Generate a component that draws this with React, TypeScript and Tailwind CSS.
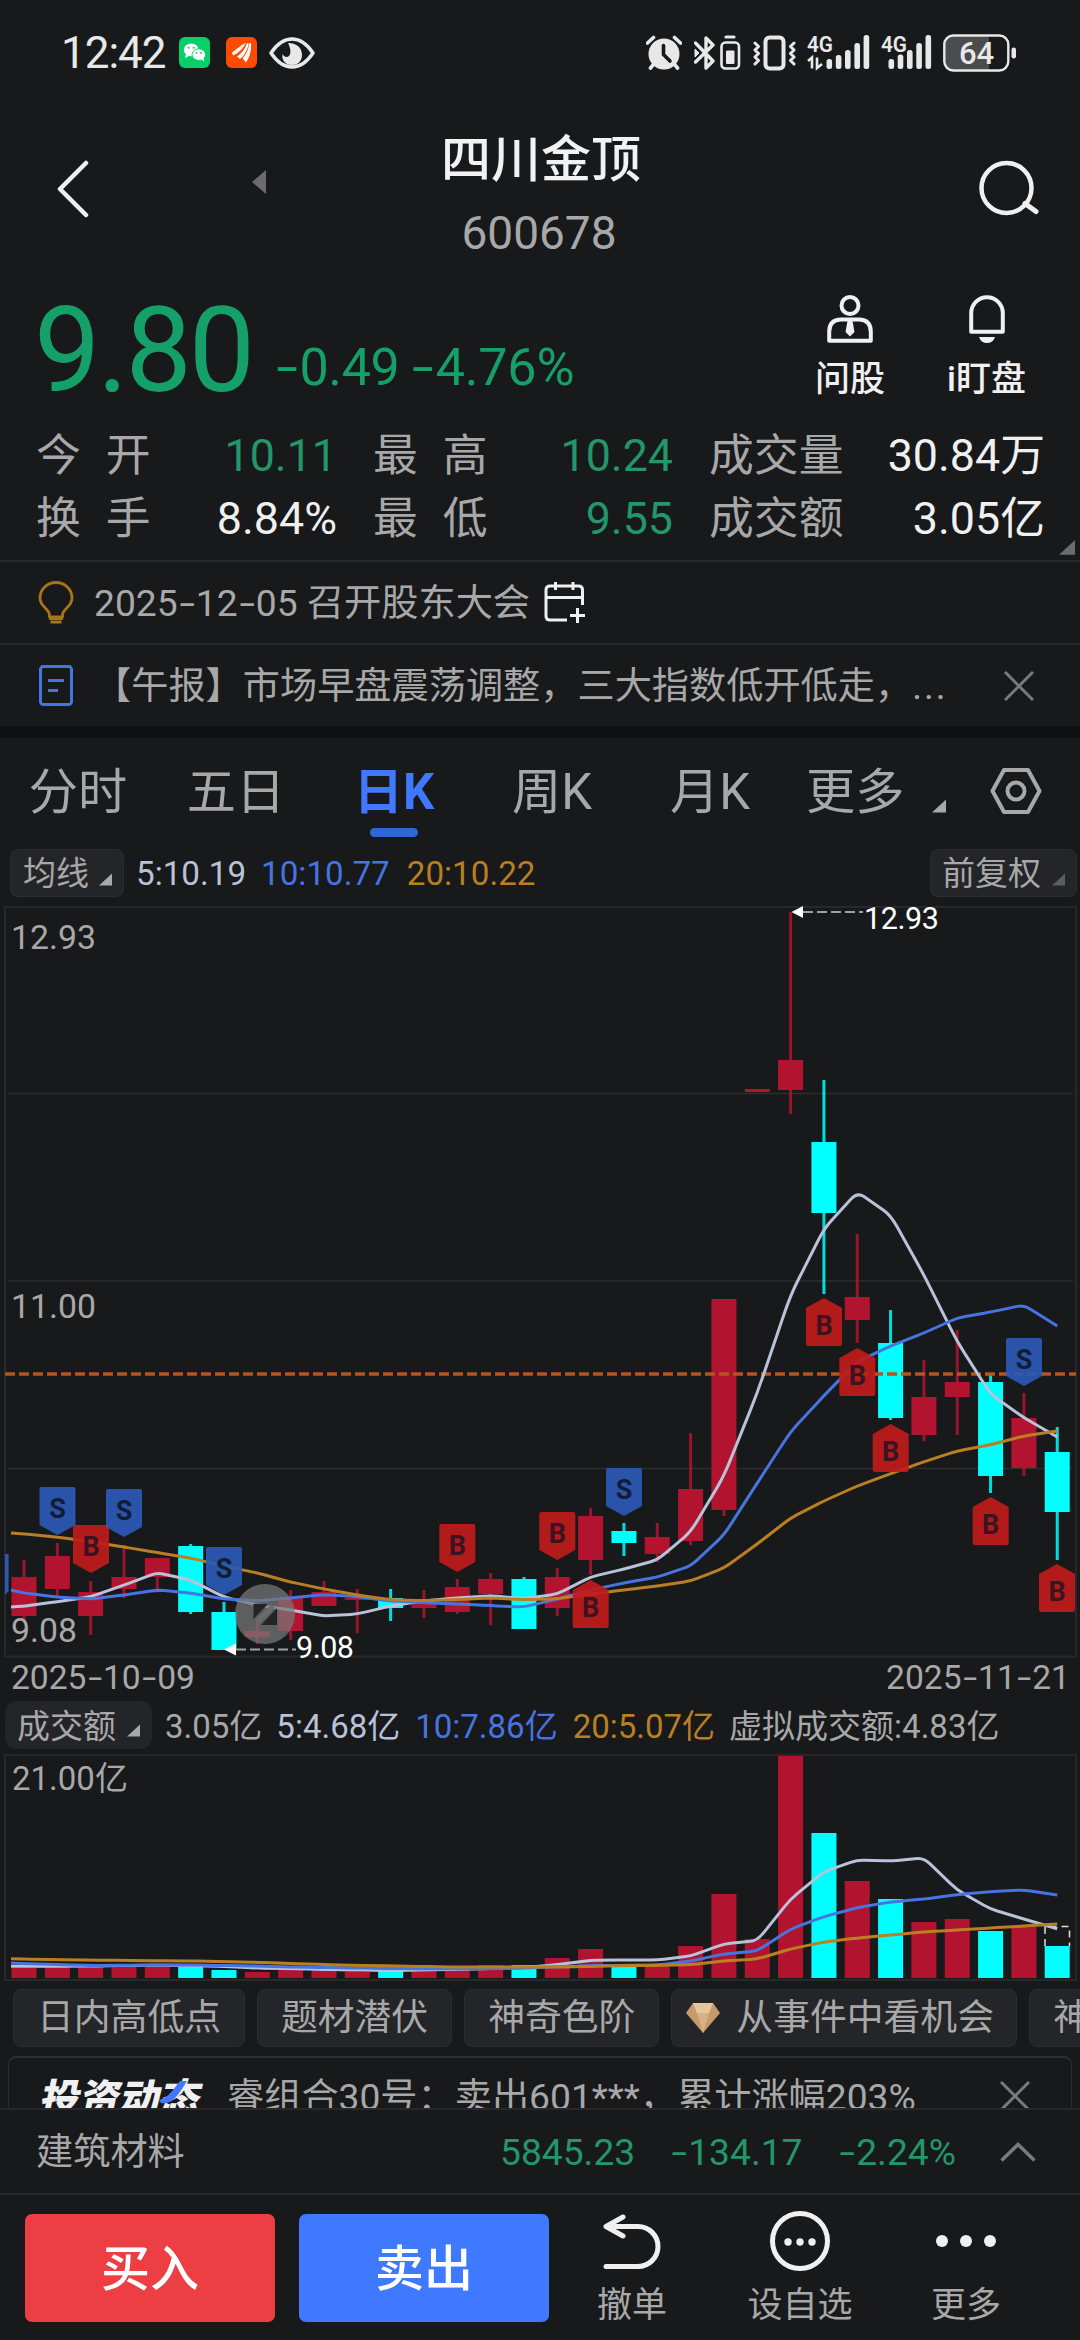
import React from "react";

const FONT = "font-[Roboto,'Noto_Sans_CJK_SC',sans-serif]";

const UP = "#b2142f";
const DOWN = "#00ffff";

// [wick top, wick bottom, body top, body bottom, is down]
const candles: [number, number, number, number, number][] = [
  [1560, 1621, 1577, 1616, 0],
  [1543, 1598, 1556, 1589, 0],
  [1581, 1635, 1592, 1616, 0],
  [1545, 1598, 1577, 1589, 0],
  [1558, 1592, 1558, 1577, 0],
  [1544, 1614, 1546, 1612, 1],
  [1602, 1650, 1612, 1650, 1],
  [1622, 1644, 1631, 1637, 0],
  [1590, 1640, 1598, 1631, 0],
  [1581, 1606, 1592, 1606, 0],
  [1589, 1633, 1598, 1600, 0],
  [1589, 1621, 1598, 1608, 1],
  [1590, 1618, 1602, 1608, 0],
  [1579, 1614, 1587, 1612, 0],
  [1573, 1625, 1579, 1594, 0],
  [1577, 1629, 1579, 1629, 1],
  [1568, 1616, 1577, 1608, 0],
  [1508, 1575, 1516, 1560, 0],
  [1523, 1556, 1531, 1543, 1],
  [1523, 1562, 1537, 1554, 0],
  [1433, 1545, 1489, 1541, 0],
  [1299, 1516, 1299, 1510, 0],
  [1089, 1092, 1089, 1092, 0],
  [912, 1114, 1060, 1090, 0],
  [1080, 1294, 1142, 1213, 1],
  [1234, 1343, 1297, 1320, 0],
  [1310, 1420, 1343, 1418, 1],
  [1360, 1441, 1397, 1435, 0],
  [1330, 1435, 1382, 1397, 0],
  [1374, 1493, 1382, 1476, 1],
  [1393, 1476, 1418, 1468, 0],
  [1427, 1560, 1452, 1512, 1],
];

const volumes = [
  1968, 1967, 1967, 1967, 1966, 1966, 1970, 1972, 1970, 1970, 1972, 1971, 1969,
  1969, 1965, 1965, 1958, 1949, 1966, 1966, 1946, 1894, 1939, 1756, 1833, 1881,
  1899, 1922, 1919, 1931, 1926, 1946,
];

// moving averages, first value sits on the left edge of the plot
const ma5 = [
  1607, 1606, 1601.7, 1596.7, 1585, 1572.7, 1580, 1597, 1605, 1610, 1616, 1614,
  1606, 1600.7, 1598, 1595.7, 1598.7, 1594, 1577, 1569, 1560, 1532, 1476, 1393,
  1295, 1229, 1192, 1215, 1275, 1341.7, 1394, 1417.7, 1437,
];
const ma10 = [
  1590, 1593, 1597, 1599, 1595, 1590, 1593, 1599, 1600.7, 1598, 1594.7, 1596.7,
  1601, 1602.7, 1604, 1605.7, 1607, 1599, 1590, 1583, 1577, 1566, 1535, 1483,
  1431.7, 1395.7, 1361.7, 1346, 1333, 1318, 1312, 1305, 1326,
];
const ma20 = [
  1533, 1534, 1537, 1541.7, 1547, 1552.7, 1558, 1566, 1573, 1582, 1589, 1595,
  1599.7, 1600.7, 1599.5, 1598, 1599.7, 1598.7, 1594, 1590, 1586, 1581, 1568,
  1544, 1518, 1501, 1486, 1473.7, 1461.7, 1451, 1444.7, 1436, 1431,
];
const vol5 = [
  1966.3, 1966.3, 1966.3, 1966, 1965.5, 1965.3, 1965.5, 1966.3, 1968, 1968.7,
  1969.5, 1970, 1970.5, 1970, 1969.3, 1968.5, 1967.7, 1964.7, 1960.3, 1960,
  1960, 1956, 1944, 1940.7, 1899, 1871.7, 1860, 1861, 1858, 1890, 1909, 1919,
  1928.7,
];
const vol10 = [
  1963, 1963.5, 1964.5, 1965.5, 1965.3, 1965, 1965, 1965.5, 1966, 1967, 1967.5,
  1968, 1968.5, 1968.7, 1968.7, 1968.7, 1968, 1966.7, 1965.7, 1965.3, 1965,
  1961, 1954, 1951, 1929, 1916.7, 1907.7, 1902, 1899, 1894.7, 1891.7, 1890,
  1895,
];
const vol20 = [
  1958.7, 1959, 1959.7, 1960.2, 1960.4, 1960.7, 1961, 1961.5, 1962.3, 1963.5,
  1964.5, 1965.3, 1966, 1966.5, 1967, 1967, 1967, 1967, 1966.5, 1965.7, 1965.3,
  1964.7, 1961, 1959, 1949, 1942, 1938, 1935, 1932, 1930, 1928, 1926, 1924,
];

const badges: [number, number, string, string][] = [
  [57.5, 1487, "S", "down"],
  [91, 1525, "B", "down"],
  [124, 1489, "S", "down"],
  [224, 1547, "S", "down"],
  [457.3, 1524, "B", "down"],
  [557.3, 1512, "B", "down"],
  [590.7, 1580, "B", "up"],
  [624, 1468, "S", "down"],
  [824, 1298, "B", "up"],
  [857.3, 1348, "B", "up"],
  [890.7, 1424, "B", "up"],
  [990.7, 1497, "B", "up"],
  [1024, 1338, "S", "down"],
  [1057, 1564, "B", "up"],
];

const cx = (i: number) => 24 + i * 33.33;

// smooths the corners between two samples
function linePath(values: number[]) {
  const pts = values.map((y, i) => [i === 0 ? 11 : cx(i - 1), y]);
  let d = `M${pts[0][0]} ${pts[0][1]}`;
  for (let i = 1; i < pts.length - 1; i++) {
    const [px, py] = pts[i - 1];
    const [x, y] = pts[i];
    const [nx, ny] = pts[i + 1];
    const t = 0.2;
    d += ` L${x + (px - x) * t} ${y + (py - y) * t} Q${x} ${y} ${x + (nx - x) * t} ${y + (ny - y) * t}`;
  }
  const last = pts[pts.length - 1];
  return `${d} L${last[0]} ${last[1]}`;
}

// digits with the wide dash
function Num({ children }: { children: string }) {
  return (
    <>
      {children.split("-").map((part, i) => (
        <React.Fragment key={i}>
          {i > 0 && (
            <span className="inline-block w-[.49em] scale-x-150 text-center">
              -
            </span>
          )}
          {part}
        </React.Fragment>
      ))}
    </>
  );
}

function Corner({ className }: { className: string }) {
  return (
    <svg viewBox="0 0 14 13" className={className} fill="currentColor">
      <path d="M14 0V13H0Z" />
    </svg>
  );
}

function Close({ className }: { className?: string }) {
  return (
    <svg width="30" height="30" viewBox="0 0 30 30" className={className} stroke="#7a7a7b" strokeWidth="3">
      <path d="M1 1L29 29M29 1L1 29" />
    </svg>
  );
}

function StatusBar() {
  return (
    <div className="flex h-[105px] items-center pl-[61px] text-[#e8e8e8]">
      <span className="w-[118px] text-[44px] leading-none tracking-[-1px]">
        12:42
      </span>
      <svg width="31" height="31" viewBox="0 0 31 31">
        <rect width="31" height="31" rx="6" fill="#07cf69" />
        <ellipse cx="12.2" cy="12.8" rx="7.4" ry="6.4" fill="#fff" />
        <path d="M7 17l-1 4 4-2z" fill="#fff" />
        <ellipse cx="19.8" cy="17.6" rx="6.8" ry="5.8" fill="#fff" stroke="#07cf69" strokeWidth="1" />
        <path d="M22 22l3 2.600-.5-4z" fill="#fff" />
        <g fill="#07cf69">
          <circle cx="9.600" cy="10.800" r="1" />
          <circle cx="14.600" cy="10.800" r="1" />
          <circle cx="17.600" cy="16" r=".9" />
          <circle cx="22" cy="16" r=".9" />
        </g>
      </svg>
      <svg width="31" height="31" viewBox="0 0 31 31" className="ml-4">
        <rect width="31" height="31" rx="6" fill="#ff4a02" />
        <g fill="#fff">
          <path d="M6 15.500C11 12 14 8.500 20 6C17 11 13 16 7 18.500Z" />
          <path d="M11 19.500C16 16 19 12 21 6L22.500 6.500C22 13 18 19 14 22Z" />
          <path d="M16.500 21C21 17 22.500 12 23 6.500L25 6C25.500 13 24 20 20 25.500Z" />
        </g>
      </svg>
      <svg width="46" height="32" viewBox="0 0 46 32" className="ml-3" fill="none">
        <path
          d="M2 16C8 7 15 2 23 2S38 7 44 16C38 25 31 30 23 30S8 25 2 16Z"
          stroke="#e8e8e8"
          strokeWidth="3.500"
          strokeLinejoin="round"
        />
        <path
          d="M19 6C27 6 33 10 33 18C33 24 29 28 23 28C16 28 12.500 23 13.500 17C15 20 18 21 20 19C22.500 16 21.500 11 19 6Z"
          fill="#e8e8e8"
        />
      </svg>

      <div className="ml-[331px] flex items-center">
        <svg width="36" height="35" viewBox="0 0 36 35" fill="none" stroke="#e8e8e8">
          <circle cx="18" cy="19" r="15.500" fill="#e8e8e8" stroke="none" />
          <path d="M1.500 8L7.500 2.500M34.500 8L28.500 2.500M7 30L4.500 33M29 30L31.500 33" strokeWidth="3.600" strokeLinecap="round" />
          <path d="M17.500 10.500V19.500L24 26" stroke="#18191b" strokeWidth="3.600" strokeLinecap="round" />
        </svg>
        <svg width="47" height="36" viewBox="0 0 47 36" className="ml-3" fill="none" stroke="#e8e8e8">
          <path d="M1.500 8L19 26L12 33V3L19 10L1.500 27" strokeWidth="3.400" strokeLinejoin="round" strokeLinecap="round" />
          <path d="M1 14L5 18L1 22Z" fill="#e8e8e8" strokeWidth="1" />
          <path d="M32 2H40" strokeWidth="3.200" strokeLinecap="round" />
          <rect x="27.500" y="7.500" width="17.500" height="26" rx="4" strokeWidth="2.600" />
          <rect x="32" y="15.500" width="8.500" height="13.500" rx="1" fill="#e8e8e8" stroke="none" />
        </svg>
        <svg width="43" height="36" viewBox="0 0 43 36" className="ml-3" fill="none" stroke="#e8e8e8">
          <rect x="12.500" y="2.500" width="18" height="31" rx="4" strokeWidth="4" />
          <path d="M2 8L5.500 11.500L2 15L5.500 18.500L2 22L5.500 25.500L2 29M41 8L37.500 11.500L41 15L37.500 18.500L41 22L37.500 25.500L41 29" strokeWidth="3" strokeLinejoin="round" strokeLinecap="round" />
        </svg>
        <svg width="63" height="43" viewBox="0 -4 63 43" className="ml-[11px]" fill="#e8e8e8">
          <text x="0" y="17" fontSize="22" fontWeight="600" textLength="26" lengthAdjust="spacingAndGlyphs">
            4G
          </text>
          <path d="M1 26L5 22.500V33.500M10 22.500V33L15 29" fill="none" stroke="#e8e8e8" strokeWidth="2.600" />
          <rect x="19.500" y="24" width="5.600" height="10" rx="2.500" />
          <rect x="28.800" y="20" width="5.600" height="14" rx="2.500" />
          <rect x="38" y="15" width="5.600" height="19" rx="2.500" />
          <rect x="47.400" y="8" width="5.600" height="26" rx="2.500" />
          <rect x="56.600" y="0" width="5.600" height="34" rx="2.500" />
        </svg>
        <svg width="51" height="43" viewBox="0 -4 51 43" className="ml-[11px]" fill="#e8e8e8">
          <text x="0" y="17" fontSize="22" fontWeight="600" textLength="26" lengthAdjust="spacingAndGlyphs">
            4G
          </text>
          <rect x="7.500" y="24" width="5.600" height="10" rx="2.500" />
          <rect x="16.700" y="19.500" width="5.600" height="14.500" rx="2.500" />
          <rect x="26" y="15" width="5.600" height="19" rx="2.500" />
          <rect x="35.300" y="8" width="5.600" height="26" rx="2.500" />
          <rect x="44.500" y="0" width="5.600" height="34" rx="2.500" />
        </svg>
        <svg width="74" height="38" viewBox="0 0 74 38" className="ml-[11px]" fill="#e8e8e8">
          <path d="M10 2H46V36H10Q2 36 2 28V10Q2 2 10 2Z" fill="#4b4c4d" />
          <rect x="1.300" y="1.500" width="64" height="35" rx="9" fill="none" stroke="#e8e8e8" strokeWidth="2.400" />
          <rect x="68.500" y="13.500" width="4.500" height="11" rx="2.200" />
          <text x="33.500" y="29.500" fontSize="31" fontWeight="500" textAnchor="middle">
            64
          </text>
        </svg>
      </div>
    </div>
  );
}

function Header() {
  return (
    <div className="flex h-[165px] pl-[56px] pr-[40px]">
      <svg width="33" height="58" viewBox="0 0 33 58" className="mt-[55px]" fill="none">
        <path d="M30 3L4 29L30 55" stroke="#f0f0f0" strokeWidth="4.500" strokeLinecap="round" strokeLinejoin="round" />
      </svg>
      <svg width="14" height="24" viewBox="0 0 14 24" className="ml-[163px] mt-[65px]">
        <path d="M14 0V24L0 12Z" fill="#6b6b6c" />
      </svg>
      <div className="flex flex-1 flex-col items-center pr-[163px] pt-[30px]">
        <h1 className="whitespace-nowrap text-[50px] font-medium leading-[50px] text-[#f2f2f2]">
          四川金顶
        </h1>
        <span className="mt-[25px] pr-1 text-[46px] leading-[46px] text-[#a8a8a9]">
          600678
        </span>
      </div>
      <svg width="61" height="56" viewBox="0 0 61 56" className="mt-[55px]" fill="none" stroke="#f0f0f0">
        <circle cx="27.500" cy="28" r="25" strokeWidth="4.500" />
        <path d="M46 43.500L57 51.500" strokeWidth="5" strokeLinecap="round" />
      </svg>
    </div>
  );
}

function Quote() {
  return (
    <div className="flex h-[146px] pl-[34px] text-[#f0f0f0]">
      <div className="flex flex-1 items-start text-[#15a06a]">
        <span className="pt-[22px] text-[118px] leading-[118px] tracking-[-3px]">
          9.80
        </span>
        <span className="ml-[22px] whitespace-nowrap pt-[72px] text-[52px] leading-[52px] tracking-[-0.4px]">
          <Num>-0.49</Num>
        </span>
        <span className="ml-[11px] whitespace-nowrap pt-[72px] text-[52px] leading-[52px] tracking-[-0.2px]">
          <Num>-4.76%</Num>
        </span>
      </div>
      <div className="mr-[54px] flex gap-[62px] pt-[25px] text-[35px] font-medium leading-[35px]">
        <div className="flex flex-col items-center">
          <svg width="46" height="48" viewBox="0 0 46 48" fill="none" stroke="#f0f0f0" strokeWidth="4">
            <circle cx="23" cy="10.500" r="8.500" />
            <path d="M2.200 45.800V37Q2.200 24.500 14 24.500H32Q43.800 24.500 43.800 37V45.800Z" strokeLinejoin="round" />
            <path d="M20.500 26H25.500L27.500 37L23 41.500L18.500 37Z" fill="#f0f0f0" stroke="none" />
          </svg>
          <span className="mt-[19px]">问股</span>
        </div>
        <div className="flex flex-col items-center">
          <svg width="36" height="48" viewBox="0 0 36 48" fill="none" stroke="#f0f0f0" strokeWidth="4">
            <path d="M2.200 36.800V18A15.800 15.800 0 0 1 33.800 18V36.800Z" strokeLinejoin="round" />
            <path d="M10 42H26Q24 48 18 48T10 42Z" fill="#f0f0f0" stroke="none" />
          </svg>
          <span className="mt-[19px]">i盯盘</span>
        </div>
      </div>
    </div>
  );
}

function Stat({ label, value, green }: { label: string; value: string; green?: boolean }) {
  return (
    <div className="flex items-center justify-between">
      <span className={`flex text-[#a8a8a9] ${label.length === 2 ? "gap-[25px]" : ""}`}>
        {label.split("").map((ch) => (
          <span key={ch}>{ch}</span>
        ))}
      </span>
      <span className={green ? "text-[#23966a]" : "text-[#f0f0f0]"}>{value}</span>
    </div>
  );
}

function Stats() {
  return (
    <div className="relative h-[146px] border-b-2 border-[#27282b] pl-[36px] pt-[8px]">
      <div className="grid grid-cols-[301px_300px_336px] gap-x-9 text-[44.800px] leading-[63px]">
        <Stat label="今开" value="10.11" green />
        <Stat label="最高" value="10.24" green />
        <Stat label="成交量" value="30.84万" />
        <Stat label="换手" value="8.84%" />
        <Stat label="最低" value="9.55" green />
        <Stat label="成交额" value="3.05亿" />
      </div>
      <Corner className="absolute bottom-[5px] right-[5px] w-4 text-[#6b6b6c]" />
    </div>
  );
}

function Notices() {
  return (
    <div className="text-[37.200px] leading-none text-[#a8a8a9]">
      <div className="flex h-[83px] items-center border-b-2 border-[#27282b] pl-[38px]">
        <svg width="36" height="43" viewBox="0 0 36 43" fill="none" stroke="#a87516" strokeWidth="2.800">
          <path d="M11.500 36V34C11.500 28 2 26 2 17A16 15.500 0 0 1 34 17C34 26 24.500 28 24.500 34V36Z" strokeLinejoin="round" />
          <path d="M11 37.500H25M12.500 41H23.500" />
        </svg>
        <span className="ml-5 whitespace-nowrap pt-[2px]">
          <Num>2025-12-05</Num> 召开股东大会
        </span>
        <svg width="42" height="41" viewBox="0 0 42 41" className="ml-[14px]" fill="none" stroke="#f0f0f0" strokeWidth="3">
          <path d="M38.500 23V8Q38.500 4 34.500 4H6Q2 4 2 8V34Q2 38 6 38H23" />
          <path d="M2 15.500H38.500M11.500 0V8M29 0V8M33.500 26V41M26 33.500H41" />
        </svg>
      </div>
      <div className="flex h-[81px] items-center pl-[39px]">
        <svg width="34" height="41" viewBox="0 0 34 41" fill="none" stroke="#4674e0" strokeWidth="3">
          <rect x="1.500" y="1.500" width="31" height="38" rx="3" />
          <path d="M9 15.500H25M9 25.500H19" />
        </svg>
        <span className="ml-[21px] w-[910px] whitespace-nowrap pt-[2px]">
          【午报】市场早盘震荡调整，三大指数低开低走，<span className="tracking-[2px]">...</span>
        </span>
        <Close />
      </div>
      <div className="h-3 bg-[#101113]" />
    </div>
  );
}

function Tabs() {
  const tabs = ["分时", "五日", "日K", "周K", "月K"];
  return (
    <div className="flex h-[108px] text-[49.200px] leading-[48px] text-[#a8a8a9]">
      {tabs.map((tab) => (
        <div key={tab} className="flex w-[158px] flex-col items-center pr-[2px] pt-[30px]">
          <span className={tab === "日K" ? "font-bold text-[#4079ff]" : ""}>{tab}</span>
          {tab === "日K" && <div className="mt-[12px] h-[9px] w-12 rounded-full bg-[#3066d6]" />}
        </div>
      ))}
      <span className="ml-[16px] pt-[30px]">更多</span>
      <Corner className="ml-[28px] mt-[61px] h-[14px] w-[14px]" />
      <svg width="52" height="46" viewBox="0 0 52 46" className="ml-[44px] mt-[30px]" fill="none" stroke="#a8a8a9" strokeWidth="4">
        <path d="M14 2H38L49.500 23L38 44H14L2.500 23Z" strokeLinejoin="round" />
        <circle cx="26" cy="23" r="8.500" />
      </svg>
    </div>
  );
}

function AverageRow() {
  return (
    <div className="flex h-[56px] items-start px-[10px] pt-[3px] text-[33px] leading-[48px]">
      <div className="flex h-12 w-[114px] rounded-lg border border-[#2c2d30] bg-[#242528] pl-[12px] text-[#a8a8a9]">
        均线
        <Corner className="ml-[10px] mt-[23px] h-[13px] w-[13px]" />
      </div>
      <span className="ml-[12px] pt-px text-[33.200px] text-[#b9c2d8]">5:10.19</span>
      <span className="ml-[15px] pt-px text-[33.200px] text-[#4674e0]">10:10.77</span>
      <span className="ml-[17px] pt-px text-[33.200px] text-[#ba7f23]">20:10.22</span>
      <div className="-mr-[7px] ml-auto flex h-12 w-[147px] rounded-lg border border-[#2c2d30] bg-[#242528] pl-[11px] text-[#a8a8a9]">
        前复权
        <Corner className="ml-[11px] mt-[23px] h-[13px] w-[13px] text-[#5d5d5e]" />
      </div>
    </div>
  );
}

function Badge({ x, y, letter, dir }: { x: number; y: number; letter: string; dir: string }) {
  const down = dir === "down";
  return (
    <g transform={`translate(${x - 18} ${y})`}>
      <path
        d={
          down
            ? "M2 0H34Q36 0 36 2V38L18 48L0 38V2Q0 0 2 0Z"
            : "M18 0L36 10V46Q36 48 34 48H2Q0 48 0 46V10Z"
        }
        fill={letter === "S" ? "#2b59b5" : "#c01b1a"}
        opacity=".92"
      />
      <text
        x="18"
        y={down ? 31 : 37}
        fontSize="27"
        fontWeight="700"
        textAnchor="middle"
        fill={letter === "S" ? "#111d35" : "#3a1420"}
      >
        {letter}
      </text>
    </g>
  );
}

function KLineChart() {
  return (
    <svg width="1080" height="757" viewBox="0 902 1080 757" className="block">
      <g stroke="#27282b" fill="none">
        <rect x="5" y="907" width="1071" height="749.500" strokeWidth="2" />
        <path d="M8 1093.500H1073M8 1281H1073M8 1468.500H1073" strokeWidth="1.600" stroke="#2c2d30" />
      </g>
      <g fontSize="33.800" fill="#a8a8a9">
        <text x="11" y="949">12.93</text>
        <text x="11" y="1318">11.00</text>
      </g>
      {candles.map(([hi, lo, top, bottom, down], i) => (
        <g key={i} fill={down ? DOWN : UP}>
          <rect x={cx(i) - 1.500} y={hi} width="3" height={lo - hi} opacity=".85" />
          <rect x={cx(i) - 12.500} y={top} width="25" height={bottom - top} />
        </g>
      ))}
      <text x="11" y="1642" fontSize="33.800" fill="#a8a8a9">
        9.08
      </text>
      <path d="M5 1374H1076" stroke="#b3561f" strokeWidth="3.500" strokeDasharray="10 4" />
      <g fill="none" strokeWidth="3">
        <path d={linePath(ma5)} stroke="#b9c2d8" />
        <path d={linePath(ma10)} stroke="#4674e0" />
        <path d={linePath(ma20)} stroke="#ba7f23" />
      </g>
      {/* badge that is scrolled out on the left */}
      <path d="M5 1554H8.600V1591L5 1595Z" fill="#2b59b5" />
      {badges.map(([x, y, letter, dir]) => (
        <Badge key={`${x}`} x={x} y={y} letter={letter} dir={dir} />
      ))}
      <circle cx="265" cy="1614" r="30" fill="#77787a" opacity=".72" />
      <path d="M253.500 1604V1619L268 1604ZM277 1608V1625H261Z" fill="#232426" />
      <path d="M257 1622L273 1606" stroke="#6a6b6c" strokeWidth="5" />
      <g stroke="#a0a0a0" strokeWidth="2" strokeDasharray="10 4">
        <path d="M803 912H863M236 1649.500H296" />
      </g>
      <g fill="#fff" fontSize="30.500">
        <path d="M791.500 912L803 906V918ZM224 1649.500L236 1643.500V1655.500Z" />
        <text x="864" y="928.500" textLength="75">
          12.93
        </text>
        <text x="296" y="1657.500" textLength="58">
          9.08
        </text>
      </g>
    </svg>
  );
}

function VolumeChart() {
  return (
    <svg width="1080" height="230" viewBox="0 1752 1080 230" className="block">
      <rect x="5" y="1755" width="1071" height="225" fill="none" stroke="#27282b" strokeWidth="2" />
      <text x="12" y="1790" fontSize="33" fill="#a8a8a9">
        21.00亿
      </text>
      {volumes.map((top, i) => (
        <rect
          key={i}
          x={cx(i) - 12.500}
          y={top}
          width="25"
          height={1978 - top}
          fill={candles[i][4] ? DOWN : UP}
        />
      ))}
      <path d="M1045 1946V1926.500H1069.500V1946" fill="none" stroke="#e0e0e0" strokeWidth="1.500" strokeDasharray="7 5" />
      <g fill="none" strokeWidth="3">
        <path d={linePath(vol5)} stroke="#b9c2d8" />
        <path d={linePath(vol10)} stroke="#4674e0" />
        <path d={linePath(vol20)} stroke="#ba7f23" />
      </g>
    </svg>
  );
}

function VolumeRow() {
  return (
    <div className="flex h-[51px] whitespace-nowrap pl-[5px] text-[33px] leading-[51px] text-[#a8a8a9]">
      <div className="flex h-12 w-[147px] rounded-xl bg-[#242528] pl-[12px]">
        成交额
        <Corner className="ml-[11px] mt-[23px] h-[13px] w-[13px]" />
      </div>
      <span className="ml-[13px]">3.05亿</span>
      <span className="ml-[14px] text-[#b9c2d8]">5:4.68亿</span>
      <span className="ml-[15px] text-[#4674e0]">10:7.86亿</span>
      <span className="ml-[15px] text-[#ba7f23]">20:5.07亿</span>
      <span className="ml-[14px]">虚拟成交额:4.83亿</span>
    </div>
  );
}

function Chips() {
  const chip =
    "flex h-[58px] shrink-0 items-center rounded-lg border border-[#2c2d30] bg-[#242528] px-[23px]";
  return (
    <div className="flex gap-3 overflow-hidden whitespace-nowrap pl-[13px] pt-[7px] text-[36.800px] leading-none text-[#a8a8a9]">
      <div className={chip}>日内高低点</div>
      <div className={chip}>题材潜伏</div>
      <div className={chip}>神奇色阶</div>
      <div className="flex h-[58px] w-[346px] shrink-0 items-center rounded-lg border border-[#2c2d30] bg-[#242528] pl-[14px]">
        <svg width="34" height="32" viewBox="0 0 34 32" className="mr-[16px]">
          <path d="M7 1H27L34 11L17 31L0 11Z" fill="#c89a68" />
          <path d="M7 1H27L23 11H11Z" fill="#e6c69d" />
          <path d="M11 11H23L17 31Z" fill="#d9b184" />
        </svg>
        从事件中看机会
      </div>
      <div className={chip}>神</div>
    </div>
  );
}

function Feed() {
  return (
    <div className="mx-2 mt-[9px] h-[52px] overflow-hidden rounded-t-lg border-x border-t-2 border-[#2c2d30] text-[37.200px] leading-[37px] text-[#a8a8a9]">
      <div className="flex whitespace-nowrap pl-[32px] pt-[21px]">
        <div className="relative w-[186px]">
          <b className="inline-block -skew-x-12 text-[40px] font-black leading-[42px] text-[#f0f0f0]">
            投资动态
          </b>
          <svg width="30" height="26" viewBox="0 0 30 26" className="absolute left-[117px] top-0">
            <path d="M1 21C10 19 14 12 22 2H29C21 15 15 26 3 24Z" fill="#4079ff" />
          </svg>
        </div>
        <span className="w-[773px]">睿组合30号：卖出601***，累计涨幅203%</span>
        <Close className="mt-[2px]" />
      </div>
    </div>
  );
}

function IndexBar() {
  return (
    <div className="flex h-[87px] items-center border-y-2 border-[#27282b] pl-[36px] text-[37.200px] leading-none text-[#23966a]">
      <span className="w-[464px] pt-[3px] text-[#a8a8a9]">建筑材料</span>
      <span className="w-[170px] pt-[3px]">5845.23</span>
      <span className="w-[168px] pt-[3px]">
        <Num>-134.17</Num>
      </span>
      <span className="w-[162px] pt-[3px]">
        <Num>-2.24%</Num>
      </span>
      <svg width="36" height="20" viewBox="0 0 36 20" fill="none" stroke="#7a7a7b" strokeWidth="3.500">
        <path d="M1.500 18.500L18 2.500L34.500 18.500" />
      </svg>
    </div>
  );
}

function Actions() {
  const button =
    "flex h-[108px] w-[250px] items-center justify-center rounded-[7px] pt-[3px] text-[49px] font-medium leading-none text-white";
  return (
    <div className="flex pl-[25px] pt-[19px] text-[35px] leading-[35px] text-[#a8a8a9]">
      <button className={`${button} bg-[#ec3e43]`}>买入</button>
      <button className={`${button} ml-6 bg-[#3f79ff]`}>卖出</button>
      <div className="ml-[47px] flex w-[72px] flex-col items-center">
        <svg width="60" height="56" viewBox="0 0 60 56" fill="none" stroke="#f0f0f0" strokeWidth="5" strokeLinecap="round" strokeLinejoin="round">
          <path d="M21 3L4 12.500L21 22M4 12.500H36A20 20 0 0 1 36 52.500H4" />
        </svg>
        <span className="mt-[18px]">撤单</span>
      </div>
      <div className="ml-[77px] flex w-[110px] flex-col items-center">
        <svg width="60" height="62" viewBox="0 0 60 62" className="-mt-[4px]" fill="#f0f0f0">
          <circle cx="30" cy="31" r="27.500" fill="none" stroke="#f0f0f0" strokeWidth="5" />
          <circle cx="18" cy="32" r="3.700" />
          <circle cx="30" cy="32" r="3.700" />
          <circle cx="42" cy="32" r="3.700" />
        </svg>
        <span className="mt-[16px]">设自选</span>
      </div>
      <div className="ml-[75px] flex w-[72px] flex-col items-center">
        <svg width="62" height="56" viewBox="0 0 62 56" fill="#f0f0f0">
          <circle cx="7" cy="27" r="6" />
          <circle cx="31" cy="27" r="6" />
          <circle cx="55" cy="27" r="6" />
        </svg>
        <span className="mt-[18px]">更多</span>
      </div>
    </div>
  );
}

export default function App() {
  return (
    <div className={`h-[2340px] w-[1080px] overflow-hidden bg-[#18191b] ${FONT}`}>
      <StatusBar />
      <Header />
      <Quote />
      <Stats />
      <Notices />
      <Tabs />
      <AverageRow />
      <KLineChart />
      <div className="flex h-[42px] justify-between pl-[11px] pr-[10px] text-[33.600px] leading-[37px] text-[#a8a8a9]">
        <span>
          <Num>2025-10-09</Num>
        </span>
        <span>
          <Num>2025-11-21</Num>
        </span>
      </div>
      <VolumeRow />
      <VolumeChart />
      <Chips />
      <Feed />
      <IndexBar />
      <Actions />
    </div>
  );
}
